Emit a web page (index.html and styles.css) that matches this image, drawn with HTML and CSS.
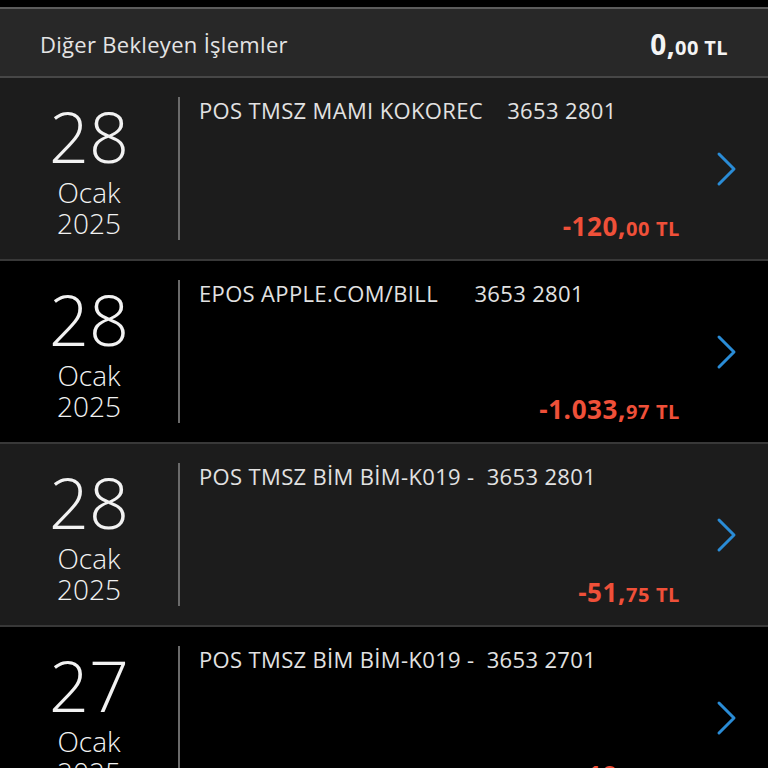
FILE: index.html
```html
<!DOCTYPE html>
<html lang="tr">
<head>
<meta charset="utf-8">
<title>Bekleyen İşlemler</title>
<link rel="stylesheet" href="styles.css">
</head>
<body>
<div class="topbar"></div>
<div class="header">
  <span class="header-title">Diğer Bekleyen İşlemler</span>
  <span class="header-amount"><span class="int">0,</span><span class="dec">00 TL</span></span>
</div>
<div class="list">
  <div class="row row-gray">
    <div class="date"><span class="day">28</span><span class="month">Ocak</span><span class="year">2025</span></div>
    <div class="divider"></div>
    <div class="main">
      <div class="desc">POS TMSZ MAMI KOKOREC    3653 2801</div>
      <div class="amount"><span class="int">-120,</span><span class="dec">00 TL</span></div>
    </div>
    <div class="chev"><svg width="22" height="36" viewBox="0 0 22 36"><polyline points="3,3 18,18 3,33" fill="none" stroke="#2a8cd6" stroke-width="3" stroke-linecap="round" stroke-linejoin="round"/></svg></div>
  </div>
  <div class="row row-black">
    <div class="date"><span class="day">28</span><span class="month">Ocak</span><span class="year">2025</span></div>
    <div class="divider"></div>
    <div class="main">
      <div class="desc">EPOS APPLE.COM/BILL      3653 2801</div>
      <div class="amount"><span class="int">-1.033,</span><span class="dec">97 TL</span></div>
    </div>
    <div class="chev"><svg width="22" height="36" viewBox="0 0 22 36"><polyline points="3,3 18,18 3,33" fill="none" stroke="#2a8cd6" stroke-width="3" stroke-linecap="round" stroke-linejoin="round"/></svg></div>
  </div>
  <div class="row row-gray">
    <div class="date"><span class="day">28</span><span class="month">Ocak</span><span class="year">2025</span></div>
    <div class="divider"></div>
    <div class="main">
      <div class="desc">POS TMSZ BİM BİM-K019 -  3653 2801</div>
      <div class="amount"><span class="int">-51,</span><span class="dec">75 TL</span></div>
    </div>
    <div class="chev"><svg width="22" height="36" viewBox="0 0 22 36"><polyline points="3,3 18,18 3,33" fill="none" stroke="#2a8cd6" stroke-width="3" stroke-linecap="round" stroke-linejoin="round"/></svg></div>
  </div>
  <div class="row row-black">
    <div class="date"><span class="day">27</span><span class="month">Ocak</span><span class="year">2025</span></div>
    <div class="divider"></div>
    <div class="main">
      <div class="desc">POS TMSZ BİM BİM-K019 -  3653 2701</div>
      <div class="amount"><span class="int">-19,</span><span class="dec">90 TL</span></div>
    </div>
    <div class="chev"><svg width="22" height="36" viewBox="0 0 22 36"><polyline points="3,3 18,18 3,33" fill="none" stroke="#2a8cd6" stroke-width="3" stroke-linecap="round" stroke-linejoin="round"/></svg></div>
  </div>
</div>
</body>
</html>
```
FILE: styles.css
```css
html, body {
  margin: 0;
  padding: 0;
  background: #000;
  font-family: "Open Sans", "Noto Sans", sans-serif;
  color: #ececec;
  overflow: hidden;
  height: 768px;
}
.topbar {
  height: 7px;
  background: #000;
  border-bottom: 2px solid #5c5c5c;
}
.header {
  height: 69px;
  background: #282828;
  border-bottom: 2px solid #474747;
  box-sizing: border-box;
  padding: 0 40px;
  display: flex;
  align-items: center;
  justify-content: space-between;
}
.header-title {
  font-size: 22px;
  letter-spacing: 0.3px;
  color: #e4e4e4;
  margin-top: 2px;
}
.header-amount {
  font-weight: 700;
  color: #f4f4f4;
  letter-spacing: 0.4px;
  margin-top: 2px;
}
.header-amount .int { font-size: 28px; }
.header-amount .dec { font-size: 20px; }
.list {
  display: flex;
  flex-direction: column;
}
.row {
  height: 183px;
  box-sizing: border-box;
  border-bottom: 2px solid #383838;
  display: flex;
  padding: 19px 0;
  flex-shrink: 0;
}
.row-gray { background: #1c1c1c; }
.row-black { background: #000; }
.date {
  width: 178px;
  display: flex;
  flex-direction: column;
  align-items: center;
  color: #f2f2f2;
  font-weight: 300;
}
.day {
  font-size: 70px;
  line-height: 70px;
  margin-top: 4px;
}
.month, .year {
  font-size: 28px;
  line-height: 31px;
}
.month { margin-top: 6px; }
.divider {
  width: 2px;
  background: #6a6a6a;
}
.main {
  flex: 1;
  padding-left: 19px;
  display: flex;
  flex-direction: column;
  justify-content: space-between;
}
.desc {
  font-size: 22px;
  letter-spacing: 0.35px;
  line-height: 24px;
  margin-top: 1px;
  white-space: pre;
  color: #e2e2e2;
}
.amount {
  align-self: flex-end;
  font-weight: 700;
  color: #ef5039;
  line-height: 26px;
  letter-spacing: 0.6px;
  margin-bottom: -3px;
}
.amount .int { font-size: 26px; }
.amount .dec { font-size: 20px; }
.chev {
  width: 88px;
  display: flex;
  align-items: center;
  justify-content: center;
  padding-left: 5px;
  box-sizing: border-box;
}
```
